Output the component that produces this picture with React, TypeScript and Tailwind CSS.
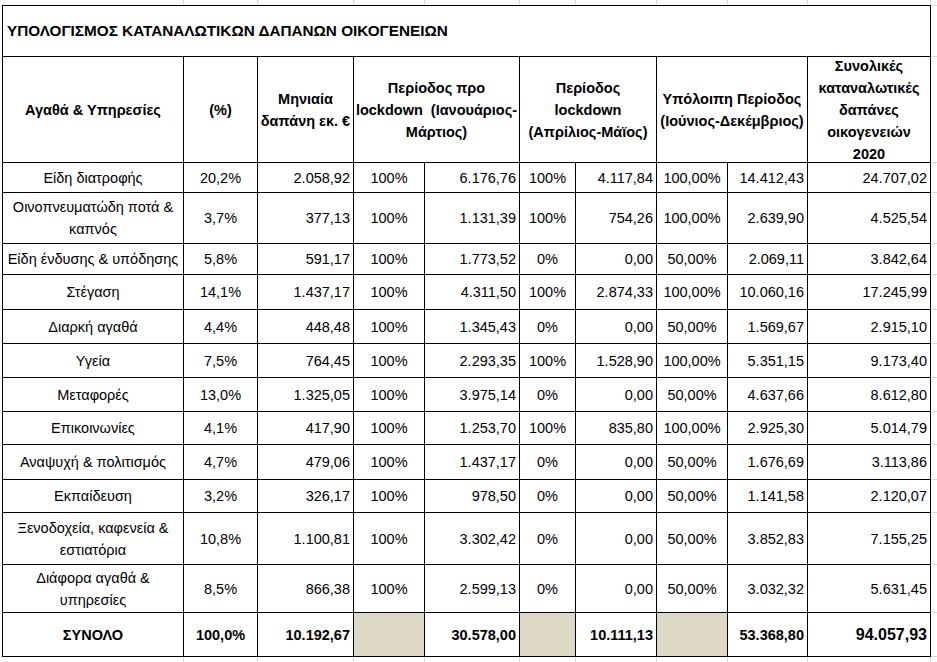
const cellWidths = [184, 74, 96, 71, 95, 56, 81, 71, 80, 123];
const rowHeights = [52, 106, 30, 51, 31, 35, 34, 34, 34, 33, 35, 33, 52, 48, 44];

const rows: { name: React.ReactNode; values: string[] }[] = [
  { name: 'Είδη διατροφής', values: ['20,2%', '2.058,92', '100%', '6.176,76', '100%', '4.117,84', '100,00%', '14.412,43', '24.707,02'] },
  { name: <>Οινοπνευματώδη ποτά &amp;<br />καπνός</>, values: ['3,7%', '377,13', '100%', '1.131,39', '100%', '754,26', '100,00%', '2.639,90', '4.525,54'] },
  { name: 'Είδη ένδυσης & υπόδησης', values: ['5,8%', '591,17', '100%', '1.773,52', '0%', '0,00', '50,00%', '2.069,11', '3.842,64'] },
  { name: 'Στέγαση', values: ['14,1%', '1.437,17', '100%', '4.311,50', '100%', '2.874,33', '100,00%', '10.060,16', '17.245,99'] },
  { name: 'Διαρκή αγαθά', values: ['4,4%', '448,48', '100%', '1.345,43', '0%', '0,00', '50,00%', '1.569,67', '2.915,10'] },
  { name: 'Υγεία', values: ['7,5%', '764,45', '100%', '2.293,35', '100%', '1.528,90', '100,00%', '5.351,15', '9.173,40'] },
  { name: 'Μεταφορές', values: ['13,0%', '1.325,05', '100%', '3.975,14', '0%', '0,00', '50,00%', '4.637,66', '8.612,80'] },
  { name: 'Επικοινωνίες', values: ['4,1%', '417,90', '100%', '1.253,70', '100%', '835,80', '100,00%', '2.925,30', '5.014,79'] },
  { name: 'Αναψυχή & πολιτισμός', values: ['4,7%', '479,06', '100%', '1.437,17', '0%', '0,00', '50,00%', '1.676,69', '3.113,86'] },
  { name: 'Εκπαίδευση', values: ['3,2%', '326,17', '100%', '978,50', '0%', '0,00', '50,00%', '1.141,58', '2.120,07'] },
  { name: <>Ξενοδοχεία, καφενεία &amp;<br />εστιατόρια</>, values: ['10,8%', '1.100,81', '100%', '3.302,42', '0%', '0,00', '50,00%', '3.852,83', '7.155,25'] },
  { name: <>Διάφορα αγαθά &amp;<br />υπηρεσίες</>, values: ['8,5%', '866,38', '100%', '2.599,13', '0%', '0,00', '50,00%', '3.032,32', '5.631,45'] },
];

// alignment of the 9 value columns
const isRight = [false, true, false, true, false, true, false, true, true];

function Cell({ right, children, className = '' }: { right?: boolean; children?: React.ReactNode; className?: string }) {
  return (
    <div
      className={`flex items-center bg-white px-[3px] ${right ? 'justify-end text-right' : 'justify-center text-center'} ${className}`}
    >
      {children}
    </div>
  );
}

function GrayBand() {
  return (
    <div className="flex h-[5px]">
      {cellWidths.map((w, i) => (
        <div key={i} style={{ width: w }} className="shrink-0 border-r border-[#d9d9d9]" />
      ))}
      <div className="flex-1" />
    </div>
  );
}

export default function App() {
  return (
    <div className="h-[662px] w-[937px] overflow-hidden bg-white font-['Liberation_Sans',Arial,sans-serif] text-[14.5px] leading-[22px] text-black">
      <GrayBand />
      <div className="flex">
        <div className="w-[2px] shrink-0" />
        <div className="grid w-[929px] shrink-0 grid-cols-[180px_73px_95px_70px_94px_55px_80px_70px_79px_122px] grid-rows-[50px_105px_29px_50px_30px_34px_33px_33px_33px_32px_34px_32px_51px_47px_43px] gap-px bg-black p-px">
          <div className="col-span-10 flex items-center bg-white pl-[4px] text-[15.3px] font-bold">
            ΥΠΟΛΟΓΙΣΜΟΣ ΚΑΤΑΝΑΛΩΤΙΚΩΝ ΔΑΠΑΝΩΝ ΟΙΚΟΓΕΝΕΙΩΝ
          </div>

          <Cell className="font-bold">Αγαθά &amp; Υπηρεσίες</Cell>
          <Cell className="font-bold">(%)</Cell>
          <Cell className="whitespace-nowrap px-0 font-bold">Μηνιαία<br />δαπάνη εκ. €</Cell>
          <Cell className="col-span-2 whitespace-pre font-bold">Περίοδος προ<br />lockdown  (Ιανουάριος-<br />Μάρτιος)</Cell>
          <Cell className="col-span-2 font-bold">Περίοδος<br />lockdown<br />(Απρίλιος-Μάϊος)</Cell>
          <Cell className="col-span-2 font-bold">Υπόλοιπη Περίοδος<br />(Ιούνιος-Δεκέμβριος)</Cell>
          <Cell className="font-bold">Συνολικές<br />καταναλωτικές<br />δαπάνες<br />οικογενειών<br />2020</Cell>

          {rows.map((r, i) => (
            <div key={i} className="contents">
              <Cell>{r.name}</Cell>
              {r.values.map((v, j) => (
                <Cell key={j} right={isRight[j]}>{v}</Cell>
              ))}
            </div>
          ))}

          <Cell className="font-bold">ΣΥΝΟΛΟ</Cell>
          <Cell className="font-bold">100,0%</Cell>
          <Cell right className="font-bold">10.192,67</Cell>
          <div className="bg-[#ddd9c4]" />
          <Cell right className="font-bold">30.578,00</Cell>
          <div className="bg-[#ddd9c4]" />
          <Cell right className="font-bold">10.111,13</Cell>
          <div className="bg-[#ddd9c4]" />
          <Cell right className="font-bold">53.368,80</Cell>
          <Cell right className="text-[16px] font-bold">94.057,93</Cell>
        </div>
        <div className="flex flex-1 flex-col border-t border-[#d9d9d9]">
          {rowHeights.map((h, i) => (
            <div key={i} style={{ height: i === 0 ? h - 1 : h }} className="shrink-0 border-b border-[#d9d9d9]" />
          ))}
        </div>
      </div>
      <GrayBand />
    </div>
  );
}
